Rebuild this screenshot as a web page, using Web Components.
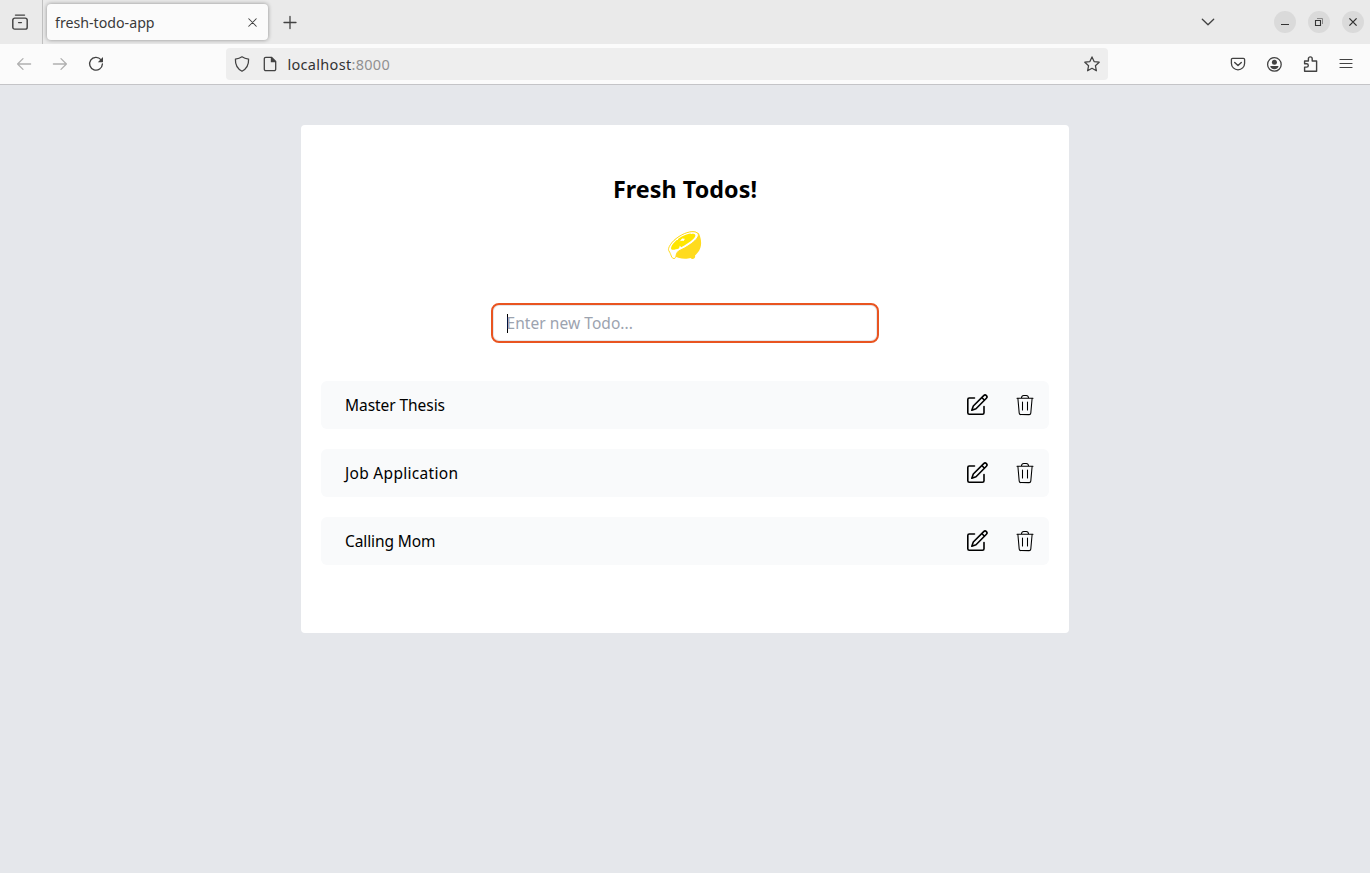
<!DOCTYPE html>
<html lang="en">
<head>
<meta charset="utf-8">
<title>fresh-todo-app</title>
<style>
html,body{margin:0;height:100%}
body{background:#e5e7eb;font-family:"Noto Sans","Open Sans",sans-serif;overflow:hidden}
</style>
</head>
<body>
<browser-window>
  <tab-strip slot="chrome"><browser-tab>fresh-todo-app</browser-tab></tab-strip>
  <nav-bar slot="chrome"></nav-bar>
  <todo-card>
    <span slot="title">Fresh Todos!</span>
    <todo-input slot="input">Enter new Todo...</todo-input>
    <todo-item style="--ls:-.06px">Master Thesis</todo-item>
    <todo-item style="--ls:.3px">Job Application</todo-item>
    <todo-item style="--ls:-.1px">Calling Mom</todo-item>
  </todo-card>
</browser-window>
<script>
const define = (name, html) => customElements.define(name, class extends HTMLElement {
  constructor() {
    super();
    this.attachShadow({mode: 'open'}).innerHTML = html;
  }
});

const icons = {
  archive: '<path d="M3.500 1.100h9M2.700 4.100h10.600a1.900 1.900 0 0 1 1.900 1.900v7.200a1.900 1.900 0 0 1-1.900 1.900H2.700a1.900 1.900 0 0 1-1.900-1.900V6a1.900 1.900 0 0 1 1.900-1.900ZM6.600 8.600h2.800" stroke-width="1.450"/>',
  close: '<path d="m4 4 8 8M12 4l-8 8" stroke-width="1.1"/>',
  plus: '<path d="M8 2.500v12M2 8.500h12" stroke-width="1.3"/>',
  down: '<path d="m2.3 5.2 5.7 5.6 5.7-5.6" stroke-width="1.3"/>',
  back: '<path d="M14.6 8H1.6M7 2.6 1.6 8 7 13.4" stroke-width="1.3"/>',
  forward: '<path d="M1.4 8h13M9 2.6 14.4 8 9 13.4" stroke-width="1.3"/>',
  reload: '<path d="M12.9 3.6A6.4 6.4 0 1 0 14.4 8" stroke-width="1.35"/><path d="M15 1v5.2H9.8Z" fill="currentColor" stroke="none"/>',
  shield: '<path d="M8 .8c2 1.4 4.200 2 6.600 2.300.2 5.400-1.600 9.700-6.600 12.100C3 12.800 1.200 8.500 1.400 3.100 3.800 2.800 6 2.200 8 .8Z" stroke-width="1.25"/>',
  page: '<path d="M3.8 1.300h5.700l4.200 4.200v7.700a1.500 1.500 0 0 1-1.500 1.500H3.800a1.500 1.500 0 0 1-1.500-1.500V2.800a1.500 1.500 0 0 1 1.500-1.500Z" stroke-width="1.3"/><path d="M8.800 1v5.200H14Z" fill="currentColor" stroke="none"/>',
  star: '<path d="m8 .9 2.100 4.700 5.100.6-3.800 3.500 1 5.100L8 12.300l-4.400 2.500 1-5.100L.8 6.200l5.100-.6Z" stroke-width="1.25"/>',
  pocket: '<path d="M2.600 2.400h10.800a1.200 1.200 0 0 1 1.200 1.200v3.600a6.600 6.600 0 0 1-13.200 0V3.600a1.200 1.200 0 0 1 1.200-1.200Z" stroke-width="1.3"/><path d="M4.700 6.400 8 9.500l3.300-3.100" stroke-width="1.4"/>',
  account: '<g transform="translate(.4 .4)"><circle cx="8" cy="8" r="6.800" stroke-width="1.3"/><circle cx="8" cy="5.900" r="2.500" fill="currentColor" stroke="none"/><path d="M3.900 9.600h8.200c0 2-1.800 3.200-4.100 3.200s-4.100-1.200-4.100-3.200Z" fill="currentColor" stroke="none"/></g>',
  puzzle: '<path d="M2.600 15.300v-4.200h2a1.700 1.700 0 0 0 0-3.400h-2V5h3.800V2.800a1.900 1.900 0 0 1 3.800 0V5h4.400v10.300Z" stroke-width="1.4"/>',
  menu: '<path d="M2 3.500h12M2 7.500h12M2 11.500h12" stroke-width="1.200"/>'
};
customElements.define('ui-icon', class extends HTMLElement {
  connectedCallback() {
    if (this.shadowRoot) return;
    this.attachShadow({mode: 'open'}).innerHTML = `
      <style>:host{display:block;flex:none;width:16px;height:16px;color:#424242}svg{display:block;width:100%;height:100%}</style>
      <svg viewBox="0 0 16 16" fill="none" stroke="currentColor" stroke-linejoin="round" stroke-linecap="round">${icons[this.getAttribute('name')]}</svg>`;
  }
});

define('browser-window', `
  <style>
    :host{display:flex;flex-direction:column;height:100vh}
    main{flex:1;display:flex;justify-content:center;align-items:flex-start;padding-top:40px}
  </style>
  <slot name="chrome"></slot><main><slot></slot></main>`);

define('tab-strip', `
  <style>
    :host{display:flex;align-items:center;height:44px;background:#eaeaea}
    .view{width:30px;height:44px;border-right:1px solid #c0c0c0;display:flex;align-items:center;padding-left:12px}
    ui-icon.add{width:16px;height:16px;margin-left:13.500px}
    .gap{flex:1}
    .down{margin-right:58px}
    .win{display:flex;gap:12px;margin-right:6px}
    .win svg{display:block;width:22px;height:22px;border-radius:50%;background:#dadada}
  </style>
  <div class="view"><ui-icon name="archive"></ui-icon></div>
  <slot></slot>
  <ui-icon class="add" name="plus"></ui-icon>
  <div class="gap"></div>
  <ui-icon class="down" name="down"></ui-icon>
  <div class="win">
    <svg viewBox="0 0 22 22" fill="none" stroke="#333"><path d="M7 13.500h8"/></svg>
    <svg viewBox="0 0 22 22" fill="none" stroke="#333"><path d="M7.500 9.500h5v5h-5Z" stroke-width="1.100"/><path d="M9 7.500h5.500V13" stroke="#888"/></svg>
    <svg viewBox="0 0 22 22" fill="none" stroke="#333"><path d="m7.400 7.400 7.200 7.200M14.600 7.400l-7.200 7.200" stroke-width="1.300"/></svg>
  </div>`);

define('browser-tab', `
  <style>
    :host{display:flex;align-items:center;box-sizing:border-box;width:221px;height:36px;margin-left:4px;padding:0 8px;border-radius:4px;background:#fbfbfb;box-shadow:0 0 4px rgba(0,0,0,.4);color:#3a3a3a}
    span{flex:1;padding-top:1px;font-size:14.2px;line-height:20px;white-space:nowrap}
    ui-icon{width:15px;height:15px;margin-right:.5px}
  </style>
  <span><slot></slot></span><ui-icon name="close"></ui-icon>`);

define('nav-bar', `
  <style>
    :host{display:flex;align-items:center;box-sizing:border-box;height:41px;padding:0 16px;background:#fbfbfb;border-bottom:1px solid #c4c4c7}
    .nav,.tools{display:flex;gap:20px}
    .off{color:#b0b0b0}
    .url{display:flex;align-items:center;box-sizing:border-box;width:882px;height:32px;margin-left:122px;padding:0 8px;border-radius:4px;background:#eee}
    .url ui-icon+ui-icon{margin-left:12px}
    .addr{flex:1;margin-left:9.500px;font-size:14.500px;line-height:20px;letter-spacing:.3px;color:#333}
    .addr i{font-style:normal;color:#919191}
    .tools{margin-left:auto}
  </style>
  <div class="nav"><ui-icon class="off" name="back"></ui-icon><ui-icon class="off" name="forward"></ui-icon><ui-icon name="reload"></ui-icon></div>
  <div class="url"><ui-icon name="shield"></ui-icon><ui-icon name="page"></ui-icon><div class="addr">localhost<i>:8000</i></div><ui-icon name="star"></ui-icon></div>
  <div class="tools"><ui-icon name="pocket"></ui-icon><ui-icon name="account"></ui-icon><ui-icon name="puzzle"></ui-icon><ui-icon name="menu"></ui-icon></div>`);

define('lemon-logo', `
  <style>:host{display:block;width:40px;height:40px}svg{display:block}</style>
  <svg width="40" height="40" viewBox="0 0 40 40" fill="none">
    <path d="M34.092 8.845C38.929 20.652 34.092 27 30 30.500c1 3.500-2.986 4.222-4.500 2.500-4.457 1.537-13.512 1.487-20-5C2 24.500 4.730 16.714 14 11.500c8-4.500 16-7 20.092-2.655Z" fill="#FFDB1E"/>
    <path d="M14 11.500c6.848-4.497 15.025-6.380 18.368-3.470C37.500 12.500 21.500 22.612 15.500 25c-6.500 2.587-3 8.500-6.500 8.500-3 0-2.500-4-5.183-7.750C2.232 23.535 6.160 16.648 14 11.500Z" fill="#fff" stroke="#FFDB1E"/>
    <path d="M28.535 8.772c4.645 1.250-.365 5.695-4.303 8.536-3.732 2.692-6.606 4.210-7.923 4.830-.366.173-1.617-2.252-1.617-1 0 .417-.7 2.238-.934 2.326-1.365.512-4.223 1.290-5.835 1.290-3.491 0-1.923-4.754 3.014-9.122.892-.789 1.478-.645 2.283-.645-.537-.773-.534-.917.403-1.546C17.790 10.640 23 8.770 25.212 8.420c.366.014.820.350.820.629.410-.140 2.095-.388 2.503-.278Z" fill="#FFE600"/>
    <path d="M14.297 16.490c.985-.747 1.644-1.010 2.099-2.526.566.121.841-.080 1.290-.701.324.466 1.657.608 2.453.701-.715.451-1.057.852-1.452 2.106-1.464-.611-3.167-.302-4.390.420Z" fill="#fff"/>
  </svg>`);

define('todo-card', `
  <style>
    :host{display:flex;flex-direction:column;align-items:center;box-sizing:border-box;width:768px;height:508px;padding:48px 20px 0;background:#fff;border-radius:4px;color:#000}
    h1{margin:0;font-size:23.300px;line-height:32px;font-weight:700;letter-spacing:.05px;white-space:nowrap}
    lemon-logo{margin-top:20px}
    .input{margin-top:38px}
    .list{align-self:stretch;display:flex;flex-direction:column;gap:20px;margin-top:38px}
  </style>
  <h1><slot name="title"></slot></h1>
  <lemon-logo></lemon-logo>
  <div class="input"><slot name="input"></slot></div>
  <div class="list"><slot></slot></div>`);

define('todo-input', `
  <style>
    :host{display:flex;align-items:center;box-sizing:border-box;width:388px;height:40px;padding-left:13.500px;border:2px solid #e95420;border-radius:8px;background:#fff;box-shadow:inset 0 0 0 1px #e5e7eb}
    i{width:1px;height:19px;background:#000}
    span{font-size:15.500px;line-height:24px;letter-spacing:.06px;color:#9ca3af;margin-left:-1px;white-space:nowrap}
  </style>
  <i></i><span><slot></slot></span>`);

define('todo-item', `
  <style>
    :host{display:flex;align-items:center;box-sizing:border-box;height:48px;padding:0 12px 0 24px;border-radius:6px;background:#f9fafb}
    span{flex:1;font-size:15.500px;line-height:24px;letter-spacing:var(--ls,0)}
    svg{display:block;width:24px;height:24px;flex:none}
    svg+svg{margin-left:24px}
  </style>
  <span><slot></slot></span>
  <svg viewBox="0 0 24 24" fill="none" stroke="#000" stroke-width="1.600" stroke-linecap="round" stroke-linejoin="round"><path d="M9.500 5H4.300A1.500 1.500 0 0 0 2.800 6.500v13.200a1.500 1.500 0 0 0 1.500 1.500h13.200a1.500 1.500 0 0 0 1.500-1.500V13.500"/><path d="M6.800 17.200 8.300 13 18.700 2.600a1.850 1.850 0 0 1 2.700 2.700L11 15.700ZM16.800 4.500l2.700 2.700"/></svg>
  <svg viewBox="0 0 24 24" fill="none" stroke="#000" stroke-width="1.050" stroke-linecap="round" stroke-linejoin="round"><path d="M4 5.300h16M4.900 5.500l1.300 14.600a1.700 1.700 0 0 0 1.700 1.500h8.200a1.700 1.700 0 0 0 1.700-1.500l1.300-14.600M8.400 5c.2-1.700 1-2.600 2.300-2.600h2.600c1.300 0 2.100.9 2.300 2.600M9.500 9v8M14.500 9v8"/></svg>`);
</script>
</body>
</html>
